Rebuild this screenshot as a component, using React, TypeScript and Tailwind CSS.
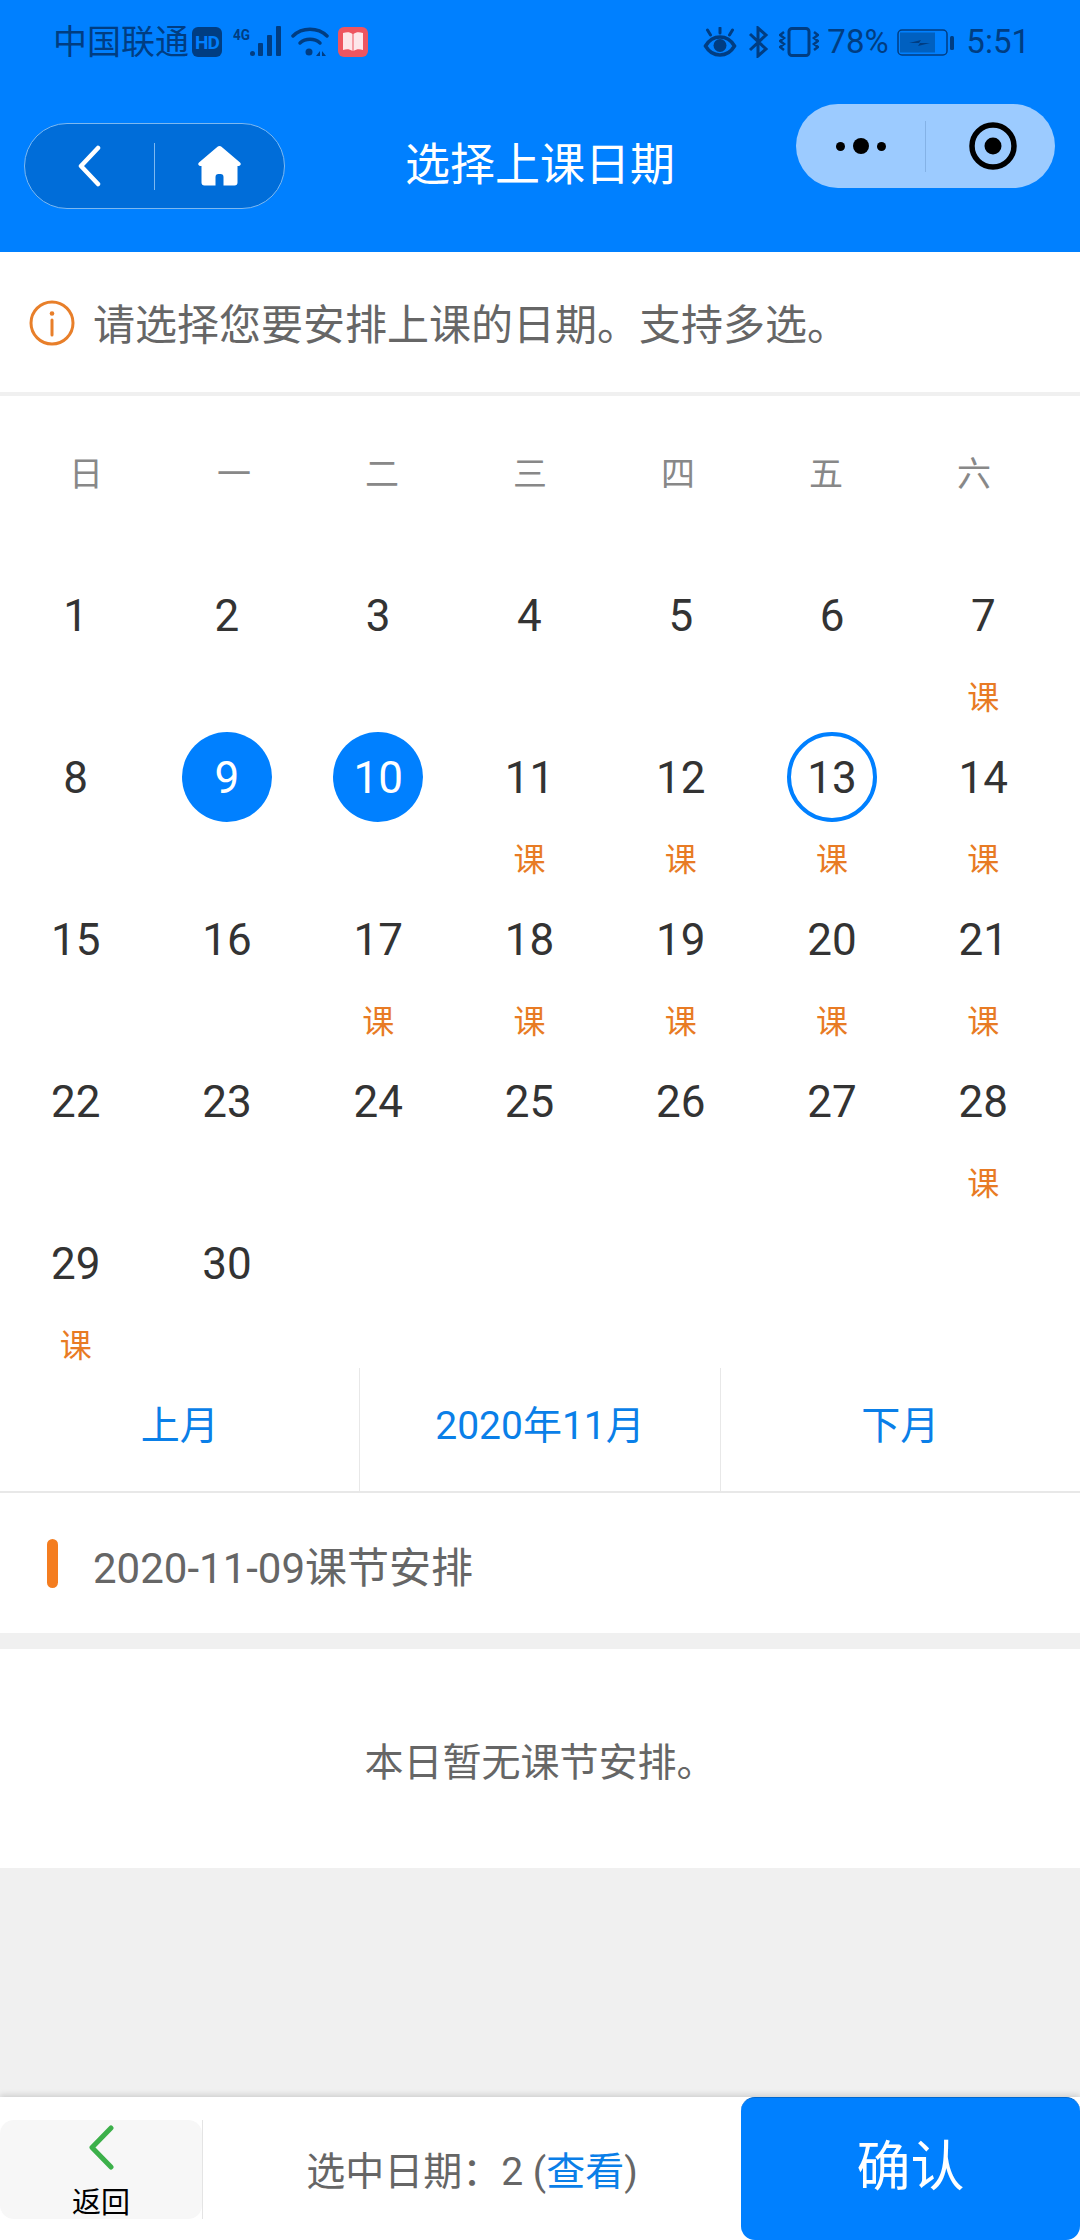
const FONT = "font-['Roboto','Noto_Sans_CJK_SC',sans-serif]";

const weekDays = ['日', '一', '二', '三', '四', '五', '六'];
const lessonDays = [7, 11, 12, 13, 14, 17, 18, 19, 20, 21, 28, 29];
const selectedDays = [9, 10];
const days = Array.from({ length: 30 }, (_, i) => i + 1);

function StatusLeft() {
  return (
    <div className="flex items-center">
      <span className="w-[139px] text-[34px] leading-[40px] text-[#003d82]">中国联通</span>
      <div className="flex h-[30px] w-[30px] items-center justify-center rounded-[6px] bg-[#003d82] text-[19px] font-bold leading-none tracking-[-1px] text-[#0080ff]">
        HD
      </div>
      <svg className="ml-[11px] h-[34px] w-[50px]" viewBox="0 0 50 34">
        <text x="0" y="15" fontSize="15" fontWeight="700" fill="#003d82" fontFamily="Roboto" textLength="17" lengthAdjust="spacingAndGlyphs">4G</text>
        <g fill="#003d82">
          <rect x="17" y="26" width="5" height="5" rx="2.500" />
          <rect x="25" y="18" width="5" height="13" rx="1" />
          <rect x="34" y="10" width="5" height="21" rx="1" />
          <rect x="43" y="1" width="5" height="30" rx="1" />
        </g>
      </svg>
      <svg className="ml-[8px] h-[30px] w-[38px]" viewBox="0 0 38 30" fill="none" stroke="#003d82" strokeWidth="3.500" strokeLinecap="round">
        <path d="M2 9C11 0 27 0 36 9" />
        <path d="M9 16c5.500-5 14.500-5 20 0" />
        <circle cx="18" cy="25" r="3.500" fill="#003d82" stroke="none" />
        <path d="M25 29l4-5v5zM31 24l4 5h-4z" fill="#003d82" stroke="none" />
      </svg>
      <svg className="ml-[9px] h-[30px] w-[30px]" viewBox="0 0 30 30">
        <rect width="30" height="30" rx="6" fill="#ee5560" />
        <path d="M5 6c4-1 7-1 9.500 1v17c-3-2-6-2-9.500-1zM25 6c-4-1-7-1-9.500 1v17c3-2 6-2 9.500-1z" fill="#fde6ea" />
      </svg>
    </div>
  );
}

function StatusRight() {
  return (
    <div className="flex items-center">
      <svg className="h-[30px] w-[34px]" viewBox="0 0 33 30" fill="none" stroke="#003d82" strokeWidth="3.500" strokeLinecap="round">
        <path d="M2 19C9 7 24 7 31 19 24 31 9 31 2 19z" />
        <circle cx="16.500" cy="18.500" r="6.500" fill="#003d82" stroke="none" />
        <path d="M16.500 1v5M4 3l3 5M29 3l-3 5" strokeWidth="3" />
      </svg>
      <svg className="ml-[11px] h-[32px] w-[21px]" viewBox="0 0 21 32" fill="none" stroke="#003d82" strokeWidth="3">
        <path d="M2 8l16 15-8 7V2l8 7L2 24" />
      </svg>
      <svg className="ml-[10px] h-[30px] w-[40px]" viewBox="0 0 40 30" fill="none" stroke="#003d82" strokeWidth="3">
        <rect x="10" y="1.500" width="20" height="27" rx="3" />
        <path d="M5 5L1 8l4 3-4 3 4 3-4 3 4 3M35 5l4 3-4 3 4 3-4 3 4 3-4 3" strokeWidth="2.500" />
      </svg>
      <span className="ml-[8px] w-[59px] text-[33px] leading-[40px] text-[#003d82]">78%</span>
      <svg className="ml-[11px] h-[27px] w-[57px]" viewBox="0 0 57 27">
        <rect x="1" y="1" width="49" height="25" rx="4" fill="none" stroke="#003d82" strokeWidth="1.500" />
        <rect x="3" y="3.500" width="35" height="20" fill="#0060c0" />
        <path d="M12 14l12-3-2 3h11l-12 3 2-3z" fill="#003d82" />
        <rect x="53" y="7" width="4" height="14" rx="1.500" fill="#003d82" />
      </svg>
      <span className="ml-[12px] text-[33px] leading-[40px] text-[#003d82]">5:51</span>
    </div>
  );
}

function Header() {
  return (
    <div className="relative h-[252px] shrink-0 bg-[#0080ff]">
      <div className="flex h-[84px] items-center justify-between pl-[53px] pr-[50px]">
        <StatusLeft />
        <StatusRight />
      </div>
      <div className="flex items-start justify-between pl-[24px] pr-[25px]">
        <div className="mt-[39px] flex h-[86px] w-[261px] items-center rounded-full border border-[#7db8f0] bg-[#006dd9]">
          <div className="flex flex-1 items-center justify-center">
            <svg className="h-[42px] w-[25px]" viewBox="0 0 25 42" fill="none" stroke="#fff" strokeWidth="4.500" strokeLinecap="round" strokeLinejoin="round">
              <path d="M21 3L4 21l17 18" />
            </svg>
          </div>
          <div className="h-[47px] w-px bg-[#7db8f0]" />
          <div className="flex flex-1 items-center justify-center">
            <svg className="h-[40px] w-[43px]" viewBox="0 0 43 40" fill="#fff">
              <path d="M21.500 0c.8 0 1.500.3 2 .8L42 16.500c1.500 1.300.6 3.500-1.300 3.500h-1.200v16.500a3 3 0 01-3 3h-11V31a3 3 0 00-3-3h-2a3 3 0 00-3 3v8.500h-11a3 3 0 01-3-3V20H2.300C.4 20-.5 17.800 1 16.500L19.500.8c.5-.5 1.200-.8 2-.8z" />
            </svg>
          </div>
        </div>
        <div className="absolute inset-x-0 top-[143px] text-center text-[45px] leading-[45px] text-white">选择上课日期</div>
        <div className="mt-[20px] flex h-[84px] w-[259px] items-center rounded-full bg-[#9ccbff]">
          <div className="flex w-[129px] items-center justify-center gap-[8px]">
            <div className="h-[9px] w-[9px] rounded-full bg-black" />
            <div className="h-[16px] w-[16px] rounded-full bg-black" />
            <div className="h-[9px] w-[9px] rounded-full bg-black" />
          </div>
          <div className="h-[51px] w-px bg-[#84b2e6]" />
          <div className="flex flex-1 items-center justify-center pl-[5px]">
            <svg className="h-[48px] w-[48px]" viewBox="0 0 48 48">
              <circle cx="24" cy="24" r="21" fill="none" stroke="#000" strokeWidth="5.500" />
              <circle cx="24" cy="24" r="8.500" fill="#000" />
            </svg>
          </div>
        </div>
      </div>
    </div>
  );
}

function Notice() {
  return (
    <div className="flex h-[140px] shrink-0 items-center bg-white pl-[29px] pt-[2px]">
      <svg className="h-[46px] w-[46px] shrink-0" viewBox="0 0 46 46" fill="none" stroke="#e87f2a" strokeWidth="3">
        <circle cx="23" cy="23" r="21" />
        <circle cx="23" cy="13.500" r="2.300" fill="#e87f2a" stroke="none" />
        <path d="M23 20v15" strokeLinecap="round" />
      </svg>
      <span className="ml-[18px] mt-[6px] text-[42px] leading-[50px] text-[#666]">请选择您要安排上课的日期。支持多选。</span>
    </div>
  );
}

function Calendar() {
  return (
    <div className="shrink-0 bg-white">
      <div className="ml-[12px] grid h-[174px] w-[1036px] grid-cols-7">
        {weekDays.map((d) => (
          <div key={d} className="flex justify-center pt-[59px] text-[34px] leading-[38px] text-[#888]">
            {d}
          </div>
        ))}
      </div>
      <div className="grid w-[1059px] grid-cols-7 gap-y-[12px]">
        {days.map((d) => {
          const selected = selectedDays.includes(d);
          return (
            <div key={d} className="flex h-[150px] flex-col items-center">
              <div
                className={
                  selected
                    ? 'flex h-[90px] w-[90px] items-center justify-center rounded-full bg-[#0080ff] pt-[2px] text-[44px] text-white'
                    : d === 13
                      ? 'flex h-[90px] w-[90px] items-center justify-center rounded-full border-4 border-[#0080ff] pt-[2px] text-[44px] text-[#333]'
                      : 'flex h-[90px] w-[90px] items-center justify-center pt-[2px] text-[44px] text-[#333]'
                }
              >
                {d}
              </div>
              {lessonDays.includes(d) && (
                <span className="mt-[23px] text-[32px] leading-[30px] text-[#e87b24]">课</span>
              )}
            </div>
          );
        })}
      </div>
      <div className="flex h-[125px] border-b-2 border-[#e8e8e8] text-[39px] text-[#0a7fe8]">
        <div className="flex flex-1 items-center justify-center pb-[6px]">上月</div>
        <div className="flex flex-1 items-center justify-center border-x border-[#e8e8e8] pb-[6px]">2020年11月</div>
        <div className="flex flex-1 items-center justify-center pb-[6px]">下月</div>
      </div>
    </div>
  );
}

function DaySchedule() {
  return (
    <>
      <div className="flex h-[140px] shrink-0 items-center bg-white pl-[47px]">
        <div className="h-[49px] w-[11px] rounded-full bg-[#f47d20]" />
        <span className="ml-[35px] mt-[12px] text-[42px] leading-[50px] text-[#666]">2020-11-09课节安排</span>
      </div>
      <div className="mt-[16px] flex h-[219px] shrink-0 items-center justify-center bg-white pt-[10px] text-[39px] text-[#666]">
        本日暂无课节安排。
      </div>
    </>
  );
}

function Footer() {
  return (
    <div className="mt-auto flex h-[143px] shrink-0 bg-white shadow-[0_-2px_6px_rgba(0,0,0,0.15)]">
      <div className="mt-[23px] flex h-[99px] w-[203px] border-r border-[#e4e4e4]">
        <div className="flex h-full w-[202px] flex-col items-center overflow-hidden rounded-[14px] bg-[#f7f7f7]">
          <svg className="mt-[5px] h-[45px] w-[25px] shrink-0" viewBox="0 0 25 45" fill="none" stroke="#3cb04a" strokeWidth="5" strokeLinecap="round" strokeLinejoin="round">
            <path d="M22 3L3 22.500 22 42" />
          </svg>
          <span className="mt-[16px] text-[29px] leading-[34px] text-black">返回</span>
        </div>
      </div>
      <div className="flex flex-1 items-center justify-center pt-[8px] text-[39px] text-[#666]">
        <span>
          选中日期：2 (<span className="text-[#0a7fe8]">查看</span>)
        </span>
      </div>
      <div className="flex h-full w-[339px] items-center justify-center rounded-[14px] border-t border-[#0068d0] bg-[#0080ff] pb-[4px] text-[54px] text-white">
        确认
      </div>
    </div>
  );
}

export default function App() {
  return (
    <div className={`${FONT} flex h-[2240px] w-[1080px] flex-col overflow-hidden bg-[#f0f0f0]`}>
      <Header />
      <Notice />
      <div className="h-[4px] shrink-0 bg-[#f0f0f0]" />
      <Calendar />
      <DaySchedule />
      <Footer />
    </div>
  );
}
